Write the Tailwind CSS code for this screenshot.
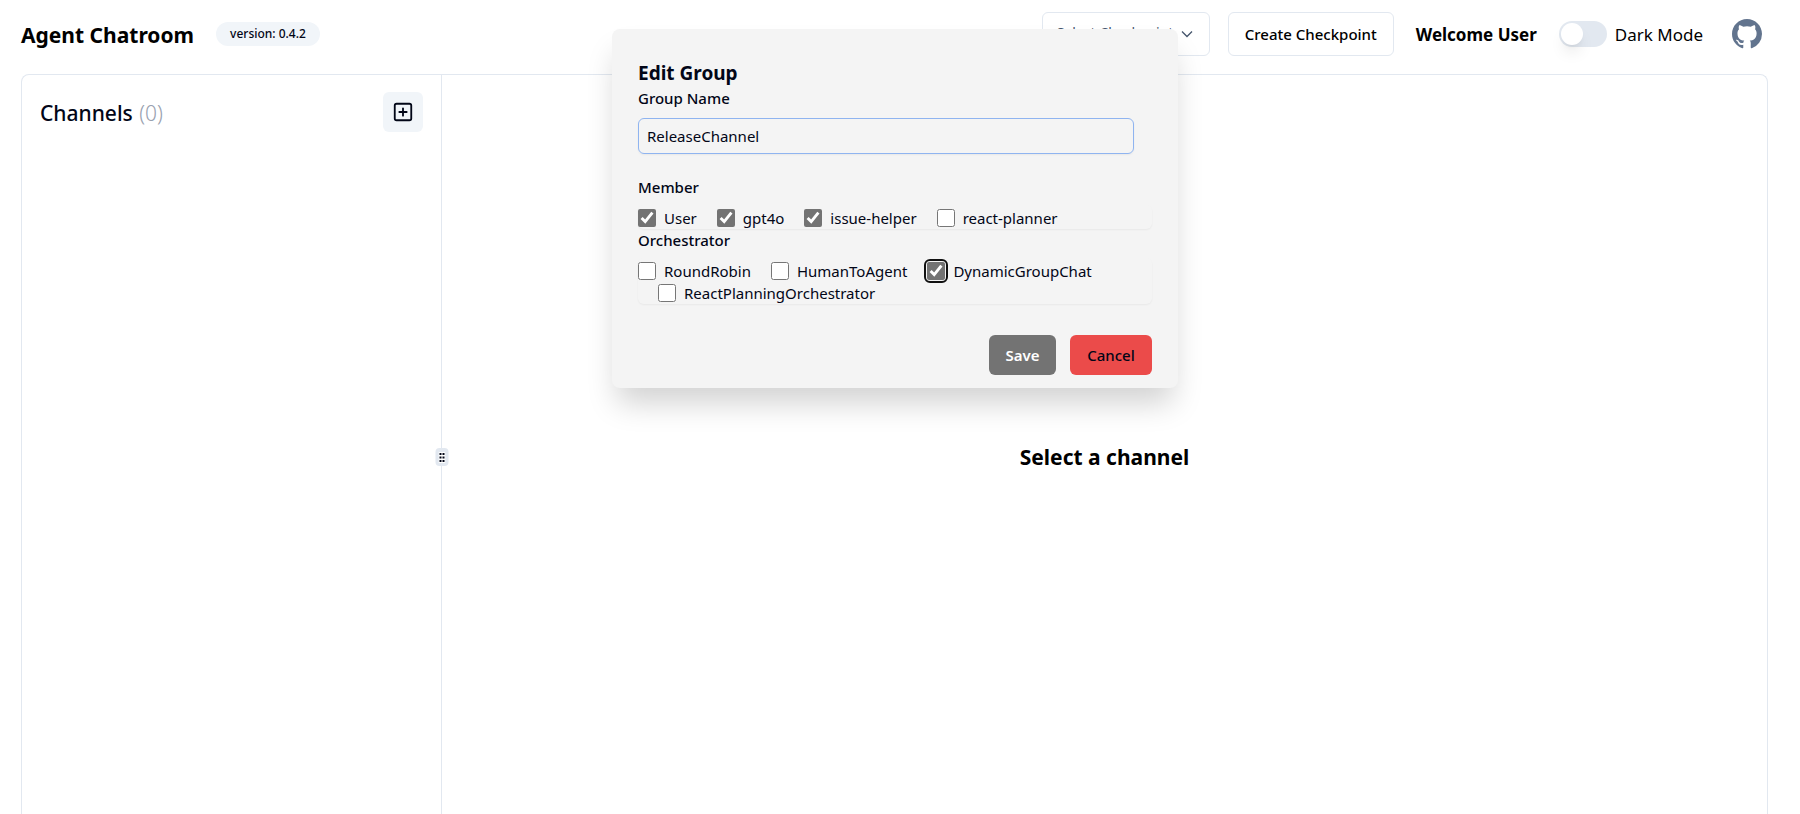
<!DOCTYPE html>
<html lang="en">
<head>
<meta charset="utf-8">
<meta name="viewport" content="width=device-width, initial-scale=1">
<title>Agent Chatroom</title>
<script src="https://cdn.jsdelivr.net/npm/@tailwindcss/browser@4"></script>
</head>
<body class="relative flex h-screen flex-col overflow-hidden bg-white font-['Noto_Sans','Open_Sans',sans-serif] text-[15px] text-[#020617]">

<header class="flex h-[74px] shrink-0 items-center pt-3 pr-[38px] pb-[18px] pl-[21px]">
  <h1 class="pt-[3px] text-[21px] font-bold whitespace-nowrap text-black">Agent Chatroom</h1>
  <span class="ml-[22px] flex h-6 items-center rounded-full bg-slate-100 px-[14px] text-[12px] font-medium whitespace-nowrap">version: 0.4.2</span>
  <div class="ml-auto flex items-center">
    <button type="button" class="flex h-11 w-[168px] items-center rounded-md border border-slate-200 bg-white px-[14px] text-slate-600">
      <span class="pb-1 text-[14px] whitespace-nowrap">Select Checkpoint</span>
      <svg class="ml-auto size-4 shrink-0" viewBox="0 0 16 16" fill="none" stroke="currentColor" stroke-width="1.3"><path d="M3 5.500l5 5 5-5"/></svg>
    </button>
    <button type="button" class="ml-[18px] h-11 w-[166px] rounded-md border border-slate-200 bg-white text-[15px] font-medium whitespace-nowrap text-black">Create Checkpoint</button>
    <span class="ml-[22px] pt-[2px] text-[17px] font-bold whitespace-nowrap text-black">Welcome User</span>
    <label class="ml-[22px] flex items-center gap-2">
      <input type="checkbox" role="switch" class="h-[26px] w-12 appearance-none rounded-full bg-slate-200 p-[2px] before:block before:size-[22px] before:rounded-full before:bg-white before:shadow-lg">
      <span class="pt-[2px] text-[17px] whitespace-nowrap text-black">Dark Mode</span>
    </label>
    <a href="#" aria-label="GitHub" class="ml-[29px] text-slate-500">
      <svg class="size-[30px]" viewBox="0 0 16 16" fill="currentColor"><path d="M8 0C3.58 0 0 3.580 0 8c0 3.540 2.290 6.530 5.470 7.590.4.070.55-.17.55-.38 0-.19-.01-.82-.01-1.490-2.010.37-2.530-.49-2.690-.94-.09-.23-.48-.94-.82-1.130-.28-.15-.68-.52-.01-.53.63-.01 1.080.58 1.230.82.72 1.210 1.870.87 2.330.66.070-.52.28-.87.51-1.070-1.780-.2-3.640-.89-3.640-3.950 0-.87.31-1.590.82-2.150-.08-.2-.36-1.020.08-2.120 0 0 .67-.21 2.200.82.64-.18 1.320-.27 2-.27s1.360.09 2 .27c1.530-1.040 2.200-.82 2.200-.82.44 1.100.16 1.920.08 2.120.51.56.82 1.270.82 2.150 0 3.070-1.870 3.750-3.650 3.950.29.25.54.73.54 1.480 0 1.070-.01 1.930-.01 2.200 0 .21.15.46.55.38A8.010 8.010 0 0 0 16 8c0-4.420-3.580-8-8-8z"/></svg>
    </a>
  </div>
</header>

<main class="mr-8 ml-[21px] flex min-h-0 grow rounded-t-lg border border-b-0 border-slate-200">
  <aside class="w-[419px] shrink-0">
    <div class="flex items-center pt-[17px] pr-[18px] pl-[18px]">
      <h2 class="pt-1 text-[21px] font-medium">Channels <span class="ml-px font-light text-gray-400">(0)</span></h2>
      <button type="button" aria-label="Add channel" class="ml-auto flex size-10 items-center justify-center rounded-md bg-slate-100">
        <svg class="size-[22px]" viewBox="0 0 24 24" fill="none" stroke="currentColor" stroke-width="2" stroke-linecap="round" stroke-linejoin="round"><rect x="3" y="3" width="18" height="18" rx="2"/><path d="M8 12h8M12 8v8"/></svg>
      </button>
    </div>
  </aside>
  <div class="relative w-px shrink-0 bg-slate-200">
    <button type="button" aria-label="Resize panels" class="absolute top-[373px] left-1/2 flex h-[18px] w-[13px] -translate-x-1/2 items-center justify-center rounded-sm bg-slate-200">
      <svg class="h-[11px] w-[7px]" viewBox="0 0 7 11"><path fill="#fff" d="M0 0h7v11H0z"/><path fill="#020617" d="M1 1h2v2H1zM4 1h2v2H4zM1 4.500h2v2H1zM4 4.500h2v2H4zM1 8h2v2H1zM4 8h2v2H4z"/></svg>
    </button>
  </div>
  <section class="flex grow justify-center pt-[366px]">
    <h2 class="text-[21px] leading-8 font-bold text-black">Select a channel</h2>
  </section>
</main>

<div role="dialog" aria-labelledby="dialog-title" class="absolute top-[29px] left-[34%] w-[566px] rounded-lg bg-[#f4f4f4] pt-8 pr-[26px] pb-[13px] pl-[26px] shadow-[0_20px_30px_-5px_rgba(0,0,0,0.18)]">
  <form>
    <h2 id="dialog-title" class="text-[19px] leading-6 font-bold">Edit Group</h2>
    <label for="group-name" class="mt-[2px] block leading-[22px] font-medium">Group Name</label>
    <input id="group-name" type="text" value="ReleaseChannel" class="mt-[9px] block h-9 w-[496px] rounded-md border border-[#8fb4f0] bg-transparent px-2 text-[15px] shadow-xs outline-none">

    <fieldset class="mt-[22px]">
      <legend class="mb-[7px] leading-[22px] font-medium">Member</legend>
      <div class="flex flex-wrap rounded-md pt-[2px] shadow-xs">
        <label class="flex items-center gap-2 leading-[22px]"><input type="checkbox" checked class="size-[18px] accent-[#737373]">User</label>
        <label class="ml-5 flex items-center gap-2 leading-[22px]"><input type="checkbox" checked class="size-[18px] accent-[#737373]">gpt4o</label>
        <label class="ml-5 flex items-center gap-2 leading-[22px]"><input type="checkbox" checked class="size-[18px] accent-[#737373]">issue-helper</label>
        <label class="ml-5 flex items-center gap-2 leading-[22px]"><input type="checkbox" class="size-[18px] accent-[#737373]">react-planner</label>
      </div>
    </fieldset>

    <fieldset>
      <legend class="mb-[7px] leading-[22px] font-medium">Orchestrator</legend>
      <div class="flex flex-wrap rounded-md pt-[2px] shadow-xs">
        <label class="flex items-center gap-2 leading-[22px]"><input type="checkbox" class="size-[18px] accent-[#737373]">RoundRobin</label>
        <label class="ml-5 flex items-center gap-2 leading-[22px]"><input type="checkbox" class="size-[18px] accent-[#737373]">HumanToAgent</label>
        <label class="ml-5 flex items-center gap-2 leading-[22px]"><span class="flex rounded-[3px] outline-2 outline-offset-1 outline-[#101010]"><input type="checkbox" checked class="size-[18px] accent-[#737373] outline-none"></span>DynamicGroupChat</label>
        <label class="ml-5 flex items-center gap-2 leading-[22px]"><input type="checkbox" class="size-[18px] accent-[#737373]">ReactPlanningOrchestrator</label>
      </div>
    </fieldset>

    <div class="mt-[31px] flex justify-end gap-[14px]">
      <button type="submit" class="h-10 w-[67px] rounded-md bg-[#737373] font-semibold text-white">Save</button>
      <button type="button" class="h-10 w-[82px] rounded-md bg-[#eb4b4a] font-medium">Cancel</button>
    </div>
  </form>
</div>
</body>
</html>
